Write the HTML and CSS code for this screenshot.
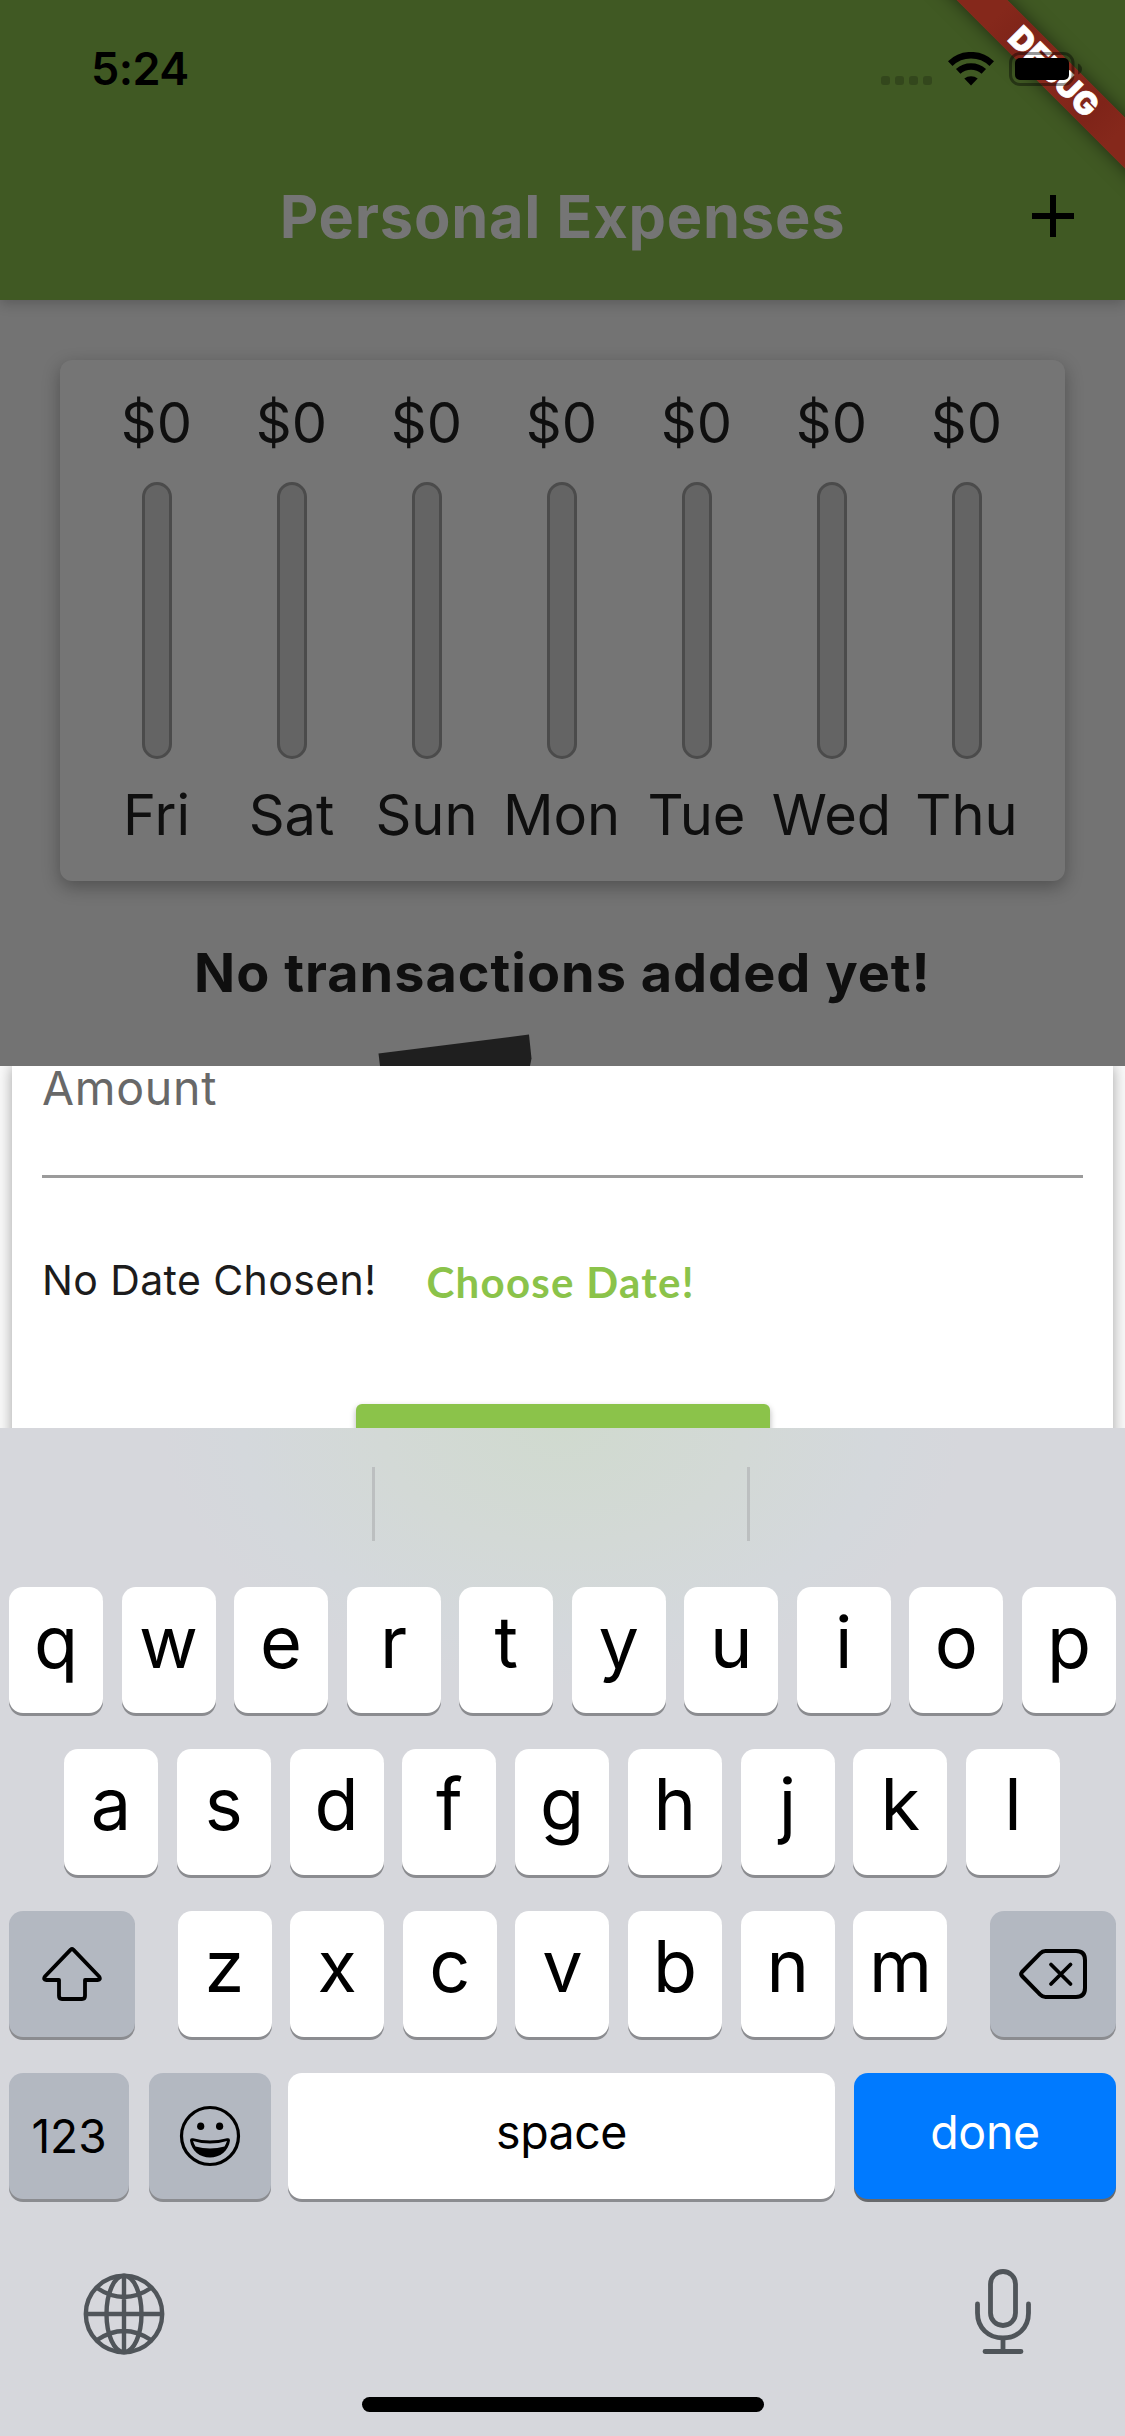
FILE: index.html
```html
<!DOCTYPE html>
<html lang="en">
<head>
<meta charset="utf-8">
<title>Personal Expenses</title>
<link rel="stylesheet" href="styles.css">
</head>
<body>
<div class="screen">
  <main class="app">
    <header class="header">
      <div class="debug-clip"><div class="debug-banner">DEBUG</div></div>
      <div class="status">
        <span class="time">5:24</span>
        <span class="signal"><i></i><i></i><i></i><i></i></span>
        <svg class="wifi" width="46" height="34" viewBox="0 0 46 34"><path d="M2.200 11.600a30 30 0 0 1 41.600 0M10.200 19.400a19 19 0 0 1 25.600 0" fill="none" stroke="#000" stroke-width="6.600"/><path d="M16.300 26.600a10.500 10.500 0 0 1 13.400 0L23 33.500z"/></svg>
        <svg class="battery" width="74" height="34" viewBox="0 0 74 34"><rect x="1.500" y="1.500" width="62.500" height="31" rx="9.500" fill="none" stroke="#000" stroke-opacity=".4" stroke-width="3"/><rect x="6" y="6" width="54" height="22" rx="5"/><path d="M69 11.500q4 2 4 5.500t-4 5.500z" opacity=".4"/></svg>
      </div>
      <div class="appbar">
        <h1 class="title">Personal Expenses</h1>
        <svg class="plus" width="42" height="42" viewBox="0 0 42 42"><path d="M21 0v42M0 21h42" stroke="#000" stroke-width="6"/></svg>
      </div>
    </header>
    <section class="chart">
      <div class="day"><span class="label">$0</span><span class="bar"></span><span class="label">Fri</span></div>
      <div class="day"><span class="label">$0</span><span class="bar"></span><span class="label">Sat</span></div>
      <div class="day"><span class="label">$0</span><span class="bar"></span><span class="label">Sun</span></div>
      <div class="day"><span class="label">$0</span><span class="bar"></span><span class="label">Mon</span></div>
      <div class="day"><span class="label">$0</span><span class="bar"></span><span class="label">Tue</span></div>
      <div class="day"><span class="label">$0</span><span class="bar"></span><span class="label">Wed</span></div>
      <div class="day"><span class="label">$0</span><span class="bar"></span><span class="label">Thu</span></div>
    </section>
    <p class="empty">No transactions added yet!</p>
    <svg class="picture" width="154" height="32" viewBox="0 0 154 32"><path d="M.5 19.500 151 .5l2.500 24-1.500 7.500H2z" fill="#1f1f1f"/></svg>
  </main>
  <section class="sheet">
    <div class="form">
      <div class="amount">Amount</div>
      <div class="date-row"><span class="date-text">No Date Chosen!</span><span class="choose">Choose Date!</span></div>
      <div class="submit"></div>
    </div>
  </section>
  <section class="keyboard">
    <div class="suggest"><i></i><i></i></div>
    <div class="row"><b class="key">q</b><b class="key">w</b><b class="key">e</b><b class="key">r</b><b class="key">t</b><b class="key">y</b><b class="key">u</b><b class="key">i</b><b class="key">o</b><b class="key">p</b></div>
    <div class="row row-home"><b class="key">a</b><b class="key">s</b><b class="key">d</b><b class="key">f</b><b class="key">g</b><b class="key">h</b><b class="key">j</b><b class="key">k</b><b class="key">l</b></div>
    <div class="row">
      <b class="key fn wide"><svg width="60" height="54" viewBox="0 0 60 54"><path d="M28.700 2.600 2.900 29.500q-2 3.300 1.400 3.500H17v16q0 3 3 3h20q3 0 3-3V33h12.700q3.400-.2 1.400-3.500L31.300 2.600q-1.300-1.200-2.600 0z" fill="none" stroke="#000" stroke-width="3.800" stroke-linejoin="round"/></svg></b>
      <div class="letters"><b class="key">z</b><b class="key">x</b><b class="key">c</b><b class="key">v</b><b class="key">b</b><b class="key">n</b><b class="key">m</b></div>
      <b class="key fn wide"><svg class="del" width="68" height="50" viewBox="0 0 68 50"><path d="M26.500 2H57q9 0 9 9v28q0 9-9 9H26.500q-3 0-5.300-2.400L3 27q-1.700-2 0-4L21.200 4.400Q23.500 2 26.500 2z" fill="none" stroke="#000" stroke-width="4" stroke-linejoin="round"/><path d="m32 15.500 19.500 19.500m0-19.500L32 35" stroke="#000" stroke-width="3.800" stroke-linecap="round"/></svg></b>
    </div>
    <div class="row row-last">
      <b class="key fn num">123</b>
      <b class="key fn emoji"><svg width="62" height="62" viewBox="0 0 62 62"><circle cx="31" cy="31" r="28.500" fill="none" stroke="#000" stroke-width="3.200"/><ellipse cx="21.700" cy="21.300" rx="3.600" ry="3.800"/><ellipse cx="40.600" cy="21.300" rx="3.600" ry="3.800"/><path d="M11 35.500q0-3 3-2.200 17 4.600 34 0 3-.8 3 2.200C49.500 46 41 52.500 31 52.500S12.500 46 11 35.500z"/><path d="M14 36q17 5 34 0-1 3-2.500 5.500-14.500 4-29 0Q15 39 14 36z" class="teeth"/></svg></b>
      <b class="key space">space</b>
      <b class="key done">done</b>
    </div>
    <div class="tools">
      <svg class="globe" width="82" height="82" viewBox="0 0 82 82" fill="none" stroke="#50555a" stroke-width="4.400"><circle cx="41" cy="41" r="38.200"/><ellipse cx="41" cy="41" rx="17.500" ry="38.200"/><path d="M41 3v76M3 41h76M14 15q27 18 54 0M14 67q27-18 54 0"/></svg>
      <svg width="58" height="86" viewBox="0 0 58 86" fill="none" stroke="#50555a" stroke-width="4.800" stroke-linecap="round"><rect x="16.500" y="2.500" width="25" height="54" rx="12.500"/><path d="M3.500 35v9c0 15 11 25 25.500 25s25.500-10 25.500-25v-9M29 69v13M11 82.500h36"/></svg>
    </div>
    <div class="home"></div>
  </section>
</div>
</body>
</html>
```
FILE: styles.css
```css
* { box-sizing: border-box; }
body { margin: 0; font-family: Inter, "Liberation Sans", sans-serif; font-kerning: normal; }
svg { display: block; flex: none; }
.screen { width: 1125px; height: 2436px; overflow: hidden; display: flex; flex-direction: column; }

/* dimmed app behind the sheet */
.app { height: 1066px; overflow: hidden; background: #737373; color: #0f0f0f; flex: none; }
.header { position: relative; height: 300px; background: #405923; box-shadow: 0 4px 12px rgba(0,0,0,.2); }
.status { position: relative; height: 132px; padding: 52px 42px 0 91px; display: flex; align-items: flex-start; color: #000; }
.time { font-size: 45px; font-weight: 600; line-height: 34px; letter-spacing: -.6px; margin-right: auto; }
.signal { display: flex; gap: 5px; padding-top: 24px; margin-right: 16px; flex: none; }
.signal i { width: 9px; height: 9px; border-radius: 3px; background: #33471c; }
.wifi { margin-right: 15px; }
.debug-clip { position: absolute; inset: 0; overflow: hidden; }
.debug-banner { position: absolute; left: 854px; top: 54px; width: 400px; height: 36px; transform: rotate(45deg); background: linear-gradient(90deg, #85281b 30%, #7f2419 38%, #88291c 50%, #7f2419 64%, #85281b 72%); color: #fff; font-size: 31.500px; font-weight: 900; -webkit-text-stroke: .7px #fff; line-height: 36px; letter-spacing: .6px; text-align: center; box-shadow: 0 0 18px rgba(0,0,0,.5); }
.appbar { height: 168px; display: grid; grid-template-columns: 1fr auto 1fr; align-items: center; }
.title { grid-column: 2; margin: 0; font-size: 59.500px; line-height: 70px; font-weight: 700; letter-spacing: .8px; color: #757575; white-space: nowrap; }
.plus { justify-self: end; margin-right: 51px; }
.chart { margin: 60px 60px 0; height: 521px; padding: 30px 29px; display: flex; background: #757575; border-radius: 12px; box-shadow: 0 6px 18px rgba(0,0,0,.3); }
.day { width: 135px; display: flex; flex-direction: column; align-items: center; flex: none; }
.label { font-size: 56px; line-height: 66px; white-space: nowrap; }
.bar { width: 30px; height: 277px; margin: 26px 0 23px; border: 3px solid #4b4b4b; border-radius: 15px; background: #646464; }
.empty { margin: 57px 0 26px; font-size: 54px; line-height: 70px; font-weight: 650; letter-spacing: 1px; text-align: center; }
.picture { margin-left: 378px; }

/* new transaction form */
.sheet { height: 362px; overflow: hidden; background: #fafafa; padding: 0 12px; flex: none; }
.form { height: 450px; padding: 0 30px; background: #fff; box-shadow: 0 0 14px rgba(0,0,0,.35); display: flex; flex-direction: column; }
.amount { flex: none; height: 112px; border-bottom: 3px solid #9b9b9b; font-size: 46.500px; line-height: 44px; letter-spacing: .7px; color: #686868; }
.date-row { flex: none; margin-top: 30px; height: 144px; display: flex; align-items: center; gap: 50px; }
.date-text { font-size: 41px; letter-spacing: .4px; color: #1c1c1c; }
.choose { padding-top: 3px; font-family: Lato, sans-serif; font-size: 42px; font-weight: 700; letter-spacing: 1.300px; color: #8bc34a; }
.submit { flex: none; align-self: center; width: 414px; height: 108px; margin-top: 52px; border-radius: 6px; background: #8bc34a; box-shadow: 0 3px 6px rgba(0,0,0,.3); }

/* on-screen keyboard */
.keyboard { height: 1008px; flex: none; background: radial-gradient(ellipse 400px 260px at 562px 0, #d0dacf, #d3d9d6 45%, #d4d8dc 80%, #d6d7dc); color: #000; }
.suggest { height: 159px; padding: 39px 375px 0 372px; display: flex; justify-content: space-between; }
.suggest i { width: 3px; height: 74px; background: #bcbfc0; }
.row { display: flex; justify-content: space-between; padding: 0 9px; height: 126px; margin-bottom: 36px; }
.row-home { padding: 0 65px 0 64px; }
.letters { width: 770px; display: flex; justify-content: space-between; }
.key { width: 94px; height: 126px; border-radius: 14px; background: #fff; box-shadow: 0 3px 0 #8b8c90; font-size: 72px; font-weight: 375; line-height: 110px; text-align: center; }
.fn { background: #b3b8c1; display: flex; align-items: center; justify-content: center; }
.wide { width: 126px; }
.num { width: 120px; font-size: 46px; font-weight: 400; }
.emoji { width: 122px; margin-left: 20px; }
.teeth { fill: #b3b8c1; }
.space { width: 547px; margin-left: 17px; font-size: 46.500px; font-weight: 400; line-height: 119px; letter-spacing: -.5px; }
.done { width: 262px; margin-left: auto; background: #007aff; color: #fff; box-shadow: 0 3px 0 #68696c; font-size: 46.500px; font-weight: 400; line-height: 119px; letter-spacing: -.3px; }
.row-last { justify-content: flex-start; margin-bottom: 0; }
.tools { height: 198px; padding: 70px 93px 0 83px; display: flex; justify-content: space-between; }
.globe { margin-top: 4px; }
.home { width: 402px; height: 15px; border-radius: 8px; margin: 0 auto; background: #000; }
```
